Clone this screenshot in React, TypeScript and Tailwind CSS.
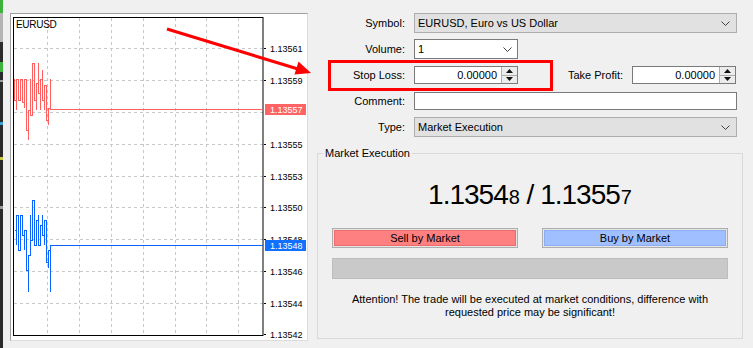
import React from "react";

type Seg = [number, number, number];

const redData: Seg[] = [
  [14, 79, 100], [16, 79, 110], [18, 85, 100], [20, 79, 93], [22, 79, 102],
  [24, 79, 108], [26, 93, 130], [28, 110, 140], [30, 79, 115], [32, 63, 95],
  [34, 79, 100], [36, 83, 110], [38, 63, 93], [40, 79, 110], [42, 70, 100],
  [44, 85, 110], [46, 100, 120], [48, 108, 125], [50, 79, 109],
];

const blueData: Seg[] = [
  [14, 230, 230], [16, 215, 245], [18, 225, 250], [20, 215, 240], [22, 215, 235],
  [24, 230, 250], [26, 240, 270], [28, 255, 292], [30, 215, 240], [32, 200, 235],
  [34, 215, 245], [36, 220, 240], [38, 215, 245], [40, 225, 240], [42, 215, 235],
  [44, 220, 245], [46, 245, 262], [48, 250, 268], [50, 245, 292],
];

function stepPath(data: Seg[], endY: number) {
  let d = "";
  data.forEach(([x, a, b], i) => {
    const xx = x + 0.5;
    const [p, q] = i % 2 === 0 ? [a, b] : [b, a];
    if (i === 0) d += `M${xx} ${p}`;
    else d += ` H${xx} V${p}`;
    d += ` V${q}`;
  });
  d += ` V${endY + 0.5} H263`;
  return d;
}

const vGrid = [47, 79, 111, 143, 175, 206, 238];
const hGrid = [48, 80, 112, 144, 176, 207, 239, 271, 303];
const labels: [number, string][] = [
  [48, "1.13561"], [80, "1.13559"], [144, "1.13555"], [176, "1.13553"],
  [207, "1.13550"], [239, "1.13548"], [271, "1.13546"], [303, "1.13544"], [334, "1.13542"],
];

function Chart() {
  return (
    <div className="mt-[13px] ml-[7px] h-[328px] w-[298px] shrink-0 border-t border-l border-t-[#a0a0a0] border-l-[#a0a0a0] border-r border-b border-r-[#dcdcdc] border-b-[#dcdcdc] bg-white">
      <svg width="296" height="326" viewBox="0 0 296 326" style={{ display: "block" }}>
        <g transform="translate(-11,-14)" fontFamily='"Liberation Sans", Arial, sans-serif'>
          {vGrid.map((x) => (
            <line key={"v" + x} x1={x + 0.5} y1={18} x2={x + 0.5} y2={335} stroke="#c8c8c8" strokeDasharray="3 3" />
          ))}
          {hGrid.map((y) => (
            <line key={"h" + y} x1={14} y1={y + 0.5} x2={263} y2={y + 0.5} stroke="#c8c8c8" strokeDasharray="3 3" />
          ))}
          <rect x={13.5} y={17.5} width={249.5} height={318} fill="none" stroke="#000" strokeWidth={1} />
          <text x={16} y={28} fontSize={10} letterSpacing={-0.3} fill="#000">EURUSD</text>
          {labels.map(([y, t]) => (
            <g key={t}>
              <line x1={264} y1={y + 0.5} x2={266} y2={y + 0.5} stroke="#000" />
              <text x={270} y={y + 3.5} fontSize={9} fill="#000">{t}</text>
            </g>
          ))}
          <path d={stepPath(redData, 109)} fill="none" stroke="#ff5f5f" strokeWidth={1} shapeRendering="crispEdges" />
          <path d={stepPath(blueData, 245)} fill="none" stroke="#0a62ff" strokeWidth={1} shapeRendering="crispEdges" />
          <rect x={265} y={104} width={41} height={11} fill="#ff6464" />
          <text x={270} y={112.5} fontSize={9} fill="#fff">1.13557</text>
          <rect x={265} y={240} width={41} height={11} fill="#1170ff" />
          <text x={270} y={248.5} fontSize={9} fill="#fff">1.13548</text>
        </g>
      </svg>
    </div>
  );
}

function Chevron() {
  return (
    <svg width="9" height="5" viewBox="0 0 9 5">
      <polyline points="0.5,0.5 4.5,4.5 8.5,0.5" fill="none" stroke="#404040" strokeWidth="1" />
    </svg>
  );
}

function Spinner() {
  return (
    <div className="flex h-full w-[16px] flex-col border-l border-[#adadad]">
      <div className="flex flex-1 items-center justify-center border-b border-[#adadad] bg-[#ececec]">
        <svg width="7" height="4" viewBox="0 0 7 4">
          <polygon points="3.5,0 7,4 0,4" fill="#111" />
        </svg>
      </div>
      <div className="flex flex-1 items-center justify-center bg-[#ececec]">
        <svg width="7" height="4" viewBox="0 0 7 4">
          <polygon points="0,0 7,0 3.5,4" fill="#111" />
        </svg>
      </div>
    </div>
  );
}

function Label({ children }: { children: React.ReactNode }) {
  return <div className="w-[97px] shrink-0 text-right">{children}</div>;
}

function Form() {
  return (
    <div className="flex flex-1 flex-col pt-[13px] text-[11px] leading-[13px] text-black">
      <div className="flex items-center">
        <Label>Symbol:</Label>
        <div className="ml-[9px] flex h-[20px] w-[323px] items-center justify-between border border-[#adadad] bg-[#e1e1e1] pl-[3px] pr-[6px]">
          <span>EURUSD, Euro vs US Dollar</span>
          <Chevron />
        </div>
      </div>
      <div className="mt-[6px] flex items-center">
        <Label>Volume:</Label>
        <div className="ml-[9px] flex h-[20px] w-[104px] items-center justify-between border border-[#7a7a7a] bg-white pl-[3px] pr-[5px]">
          <span>1</span>
          <Chevron />
        </div>
      </div>
      <div className="mt-[7px] flex items-center">
        <Label>Stop Loss:</Label>
        <div className="ml-[9px] flex h-[18px] w-[104px] border border-[#7a7a7a] bg-white">
          <div className="flex flex-1 items-center justify-end pr-[4px]">0.00000</div>
          <Spinner />
        </div>
        <div className="ml-[41px] w-[64px] text-right">Take Profit:</div>
        <div className="ml-[9px] flex h-[18px] w-[104px] border border-[#7a7a7a] bg-white">
          <div className="flex flex-1 items-center justify-end pr-[4px]">0.00000</div>
          <Spinner />
        </div>
      </div>
      <div className="mt-[8px] flex items-center">
        <Label>Comment:</Label>
        <div className="ml-[9px] h-[18px] w-[323px] border border-[#7a7a7a] bg-white" />
      </div>
      <div className="mt-[7px] flex items-center">
        <Label>Type:</Label>
        <div className="ml-[9px] flex h-[20px] w-[323px] items-center justify-between border border-[#adadad] bg-[#e1e1e1] pl-[3px] pr-[6px]">
          <span>Market Execution</span>
          <Chevron />
        </div>
      </div>
      <fieldset className="mt-[10px] ml-[9px] h-[192px] w-[426px] border border-[#d9d9d9]">
        <legend className="ml-[5px] px-[2px]">Market Execution</legend>
        <div className="mt-[19px] flex h-[32px] items-baseline justify-center leading-[32px]">
          <span className="text-[28px] tracking-[-1px]">1.1354</span>
          <span className="ml-[1px] text-[20px]">8</span>
          <span className="text-[28px] tracking-[-1px]">&nbsp;/ 1.1355</span>
          <span className="ml-[1px] text-[20px]">7</span>
        </div>
        <div className="mt-[17px] flex justify-between px-[14px]">
          <div className="h-[20px] w-[186px] border border-[#adadad] bg-[#e6e6e6] p-[1px]">
            <div className="flex h-full items-center justify-center border border-[#ec6c6c] bg-[#ff8080]">Sell by Market</div>
          </div>
          <div className="h-[20px] w-[186px] border border-[#adadad] bg-[#e6e6e6] p-[1px]">
            <div className="flex h-full items-center justify-center border border-[#8eacf2] bg-[#a0bfff]">Buy by Market</div>
          </div>
        </div>
        <div className="mx-[14px] mt-[10px] h-[21px] border border-[#bdbdbd] bg-[#c9c9c9]" />
        <div className="mt-[14px] px-[10px] text-center leading-[13px]">
          Attention! The trade will be executed at market conditions, difference with
          <br />
          requested price may be significant!
        </div>
      </fieldset>
    </div>
  );
}

export default function App() {
  return (
    <div
      className="relative flex h-[348px] w-[753px] overflow-hidden bg-[#f0f0f0]"
      style={{ fontFamily: '"Liberation Sans", Arial, sans-serif' }}
    >
      <div className="flex h-full w-[3px] shrink-0 flex-col bg-[#2b2b2b]">
        <div className="h-[13px] bg-[#3cb43c]" />
        <div className="h-[29px] bg-[#b4b4b4]" />
        <div className="h-[20px]" />
        <div className="h-[10px] bg-[#3cb43c]" />
        <div className="h-[8px]" />
        <div className="h-[2px] bg-[#9a9a9a]" />
        <div className="h-[40px]" />
        <div className="h-[3px] bg-[#3aa0d8]" />
        <div className="h-[32px]" />
        <div className="h-[3px] bg-[#c8c840]" />
        <div className="h-[46px]" />
        <div className="h-[3px] bg-[#9a9a9a]" />
      </div>
      <Chart />
      <Form />
      <div className="pointer-events-none absolute left-[328px] top-[60px] h-[31px] w-[225px] border-[3px] border-[#ff0000]" />
      <svg className="pointer-events-none absolute left-0 top-0" width="753" height="348" viewBox="0 0 753 348">
        <line x1="167" y1="29" x2="298" y2="69" stroke="#ff0000" strokeWidth="3" />
        <polygon points="311,73 294.5,74.5 298.5,61.5" fill="#ff0000" />
      </svg>
    </div>
  );
}
